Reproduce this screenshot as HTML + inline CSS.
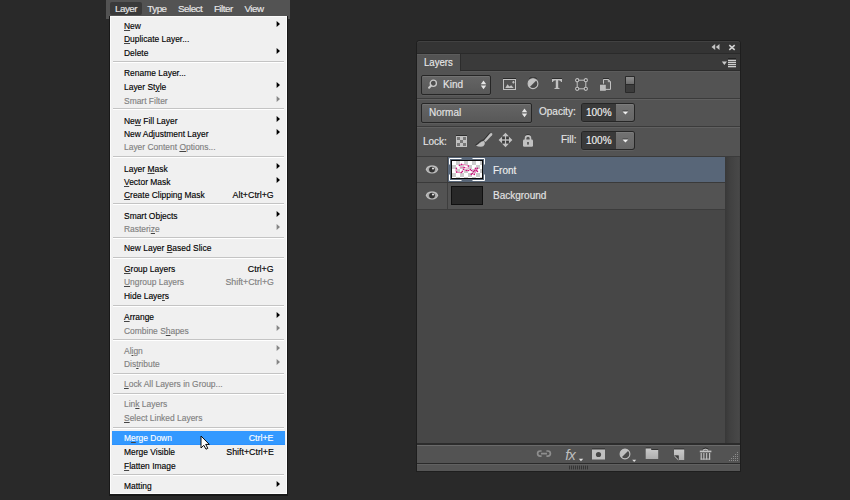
<!DOCTYPE html>
<html><head><meta charset="utf-8"><style>
html,body{margin:0;padding:0;width:850px;height:500px;overflow:hidden;background:#292929;}
body{position:relative;font-family:"Liberation Sans",sans-serif;}
.t{position:absolute;white-space:nowrap;line-height:1;}
.m{-webkit-text-stroke:0.15px currentColor;}
u{text-decoration-color:#444;text-decoration-thickness:1px;text-underline-offset:1px;}
.sep{position:absolute;left:113px;width:171px;height:1px;background:#c4c4c4;border-bottom:1px solid #ffffff;}
.hl{position:absolute;left:112px;width:173px;background:#3399ff;box-shadow:inset 0 -1px 0 #2b91ff;}
.arr{position:absolute;left:276.5px;width:0;height:0;border-top:2.6px solid transparent;border-bottom:2.6px solid transparent;border-left:3.6px solid #000;}
</style></head><body>
<div style="position:absolute;left:106px;top:0;width:184px;height:19px;background:#535353"></div>
<div style="position:absolute;left:110px;top:2px;width:32px;height:13px;background:#3a3a3a;border-radius:2px"></div>
<div class="t m" style="left:115.0px;top:3.70px;font-size:9.8px;color:#e8e8e8;letter-spacing:-0.5px;">Layer</div>
<div class="t m" style="left:147.3px;top:3.70px;font-size:9.8px;color:#e8e8e8;letter-spacing:-0.5px;">Type</div>
<div class="t m" style="left:178.0px;top:3.70px;font-size:9.8px;color:#e8e8e8;letter-spacing:-0.5px;">Select</div>
<div class="t m" style="left:213.9px;top:3.70px;font-size:9.8px;color:#e8e8e8;letter-spacing:-0.5px;">Filter</div>
<div class="t m" style="left:244.5px;top:3.70px;font-size:9.8px;color:#e8e8e8;letter-spacing:-0.5px;">View</div>
<div style="position:absolute;left:109px;top:16px;width:179px;height:480px;background:#181818"></div>
<div style="position:absolute;left:110px;top:16px;width:177px;height:478px;background:#f0f0f0;box-shadow:inset 1px 1px 0 #fbfbfb, inset -1px -1px 0 #fbfbfb"></div>
<div class="t m" style="left:123.6px;top:21.30px;font-size:9.8px;color:#000000;letter-spacing:0px;transform:scaleX(0.862);transform-origin:0 0;"><u>N</u>ew</div>
<svg style="position:absolute;left:275px;top:20.2px" width="6" height="8" viewBox="0 0 6 8"><path d="M1.6 1 L5 4 L1.6 7 Z" fill="#000"/></svg>
<div class="t m" style="left:123.6px;top:34.30px;font-size:9.8px;color:#000000;letter-spacing:0px;transform:scaleX(0.862);transform-origin:0 0;"><u>D</u>uplicate Layer...</div>
<div class="t m" style="left:123.6px;top:48.00px;font-size:9.8px;color:#000000;letter-spacing:0px;transform:scaleX(0.862);transform-origin:0 0;">Delete</div>
<svg style="position:absolute;left:275px;top:46.9px" width="6" height="8" viewBox="0 0 6 8"><path d="M1.6 1 L5 4 L1.6 7 Z" fill="#000"/></svg>
<div class="sep" style="top:61px"></div>
<div class="t m" style="left:123.6px;top:68.00px;font-size:9.8px;color:#000000;letter-spacing:0px;transform:scaleX(0.862);transform-origin:0 0;">Rename Layer...</div>
<div class="t m" style="left:123.6px;top:81.80px;font-size:9.8px;color:#000000;letter-spacing:0px;transform:scaleX(0.862);transform-origin:0 0;">Layer St<u>y</u>le</div>
<svg style="position:absolute;left:275px;top:80.7px" width="6" height="8" viewBox="0 0 6 8"><path d="M1.6 1 L5 4 L1.6 7 Z" fill="#000"/></svg>
<div class="t m" style="left:123.6px;top:95.60px;font-size:9.8px;color:#808080;letter-spacing:0px;transform:scaleX(0.862);transform-origin:0 0;">Smart Filter</div>
<svg style="position:absolute;left:275px;top:94.5px" width="6" height="8" viewBox="0 0 6 8"><path d="M1.6 1 L5 4 L1.6 7 Z" fill="#858585"/></svg>
<div class="sep" style="top:108px"></div>
<div class="t m" style="left:123.6px;top:115.60px;font-size:9.8px;color:#000000;letter-spacing:0px;transform:scaleX(0.862);transform-origin:0 0;">Ne<u>w</u> Fill Layer</div>
<svg style="position:absolute;left:275px;top:114.5px" width="6" height="8" viewBox="0 0 6 8"><path d="M1.6 1 L5 4 L1.6 7 Z" fill="#000"/></svg>
<div class="t m" style="left:123.6px;top:128.90px;font-size:9.8px;color:#000000;letter-spacing:0px;transform:scaleX(0.862);transform-origin:0 0;">New Adjustment Layer</div>
<svg style="position:absolute;left:275px;top:127.8px" width="6" height="8" viewBox="0 0 6 8"><path d="M1.6 1 L5 4 L1.6 7 Z" fill="#000"/></svg>
<div class="t m" style="left:123.6px;top:142.10px;font-size:9.8px;color:#808080;letter-spacing:0px;transform:scaleX(0.862);transform-origin:0 0;">Layer Content <u>O</u>ptions...</div>
<div class="sep" style="top:156px"></div>
<div class="t m" style="left:123.6px;top:163.50px;font-size:9.8px;color:#000000;letter-spacing:0px;transform:scaleX(0.862);transform-origin:0 0;">Layer <u>M</u>ask</div>
<svg style="position:absolute;left:275px;top:162.4px" width="6" height="8" viewBox="0 0 6 8"><path d="M1.6 1 L5 4 L1.6 7 Z" fill="#000"/></svg>
<div class="t m" style="left:123.6px;top:177.10px;font-size:9.8px;color:#000000;letter-spacing:0px;transform:scaleX(0.862);transform-origin:0 0;"><u>V</u>ector Mask</div>
<svg style="position:absolute;left:275px;top:176.0px" width="6" height="8" viewBox="0 0 6 8"><path d="M1.6 1 L5 4 L1.6 7 Z" fill="#000"/></svg>
<div class="t m" style="left:123.6px;top:190.30px;font-size:9.8px;color:#000000;letter-spacing:0px;transform:scaleX(0.862);transform-origin:0 0;"><u>C</u>reate Clipping Mask</div>
<div class="t m" style="right:576.5px;top:190.30px;font-size:9.8px;color:#000000;letter-spacing:0px;transform:scaleX(0.9);transform-origin:100% 0;">Alt+Ctrl+G</div>
<div class="sep" style="top:203px"></div>
<div class="t m" style="left:123.6px;top:210.80px;font-size:9.8px;color:#000000;letter-spacing:0px;transform:scaleX(0.862);transform-origin:0 0;">Smart Objects</div>
<svg style="position:absolute;left:275px;top:209.7px" width="6" height="8" viewBox="0 0 6 8"><path d="M1.6 1 L5 4 L1.6 7 Z" fill="#000"/></svg>
<div class="t m" style="left:123.6px;top:224.30px;font-size:9.8px;color:#808080;letter-spacing:0px;transform:scaleX(0.862);transform-origin:0 0;">Rasteri<u>z</u>e</div>
<svg style="position:absolute;left:275px;top:223.2px" width="6" height="8" viewBox="0 0 6 8"><path d="M1.6 1 L5 4 L1.6 7 Z" fill="#858585"/></svg>
<div class="sep" style="top:237px"></div>
<div class="t m" style="left:123.6px;top:243.30px;font-size:9.8px;color:#000000;letter-spacing:0px;transform:scaleX(0.862);transform-origin:0 0;">New Layer <u>B</u>ased Slice</div>
<div class="sep" style="top:257px"></div>
<div class="t m" style="left:123.6px;top:263.70px;font-size:9.8px;color:#000000;letter-spacing:0px;transform:scaleX(0.862);transform-origin:0 0;"><u>G</u>roup Layers</div>
<div class="t m" style="right:576.5px;top:263.70px;font-size:9.8px;color:#000000;letter-spacing:0px;transform:scaleX(0.9);transform-origin:100% 0;">Ctrl+G</div>
<div class="t m" style="left:123.6px;top:277.30px;font-size:9.8px;color:#808080;letter-spacing:0px;transform:scaleX(0.862);transform-origin:0 0;"><u>U</u>ngroup Layers</div>
<div class="t m" style="right:576.5px;top:277.30px;font-size:9.8px;color:#808080;letter-spacing:0px;transform:scaleX(0.9);transform-origin:100% 0;">Shift+Ctrl+G</div>
<div class="t m" style="left:123.6px;top:291.00px;font-size:9.8px;color:#000000;letter-spacing:0px;transform:scaleX(0.862);transform-origin:0 0;">Hide Laye<u>r</u>s</div>
<div class="sep" style="top:305px"></div>
<div class="t m" style="left:123.6px;top:311.90px;font-size:9.8px;color:#000000;letter-spacing:0px;transform:scaleX(0.862);transform-origin:0 0;"><u>A</u>rrange</div>
<svg style="position:absolute;left:275px;top:310.8px" width="6" height="8" viewBox="0 0 6 8"><path d="M1.6 1 L5 4 L1.6 7 Z" fill="#000"/></svg>
<div class="t m" style="left:123.6px;top:325.50px;font-size:9.8px;color:#808080;letter-spacing:0px;transform:scaleX(0.862);transform-origin:0 0;">Combine S<u>h</u>apes</div>
<svg style="position:absolute;left:275px;top:324.4px" width="6" height="8" viewBox="0 0 6 8"><path d="M1.6 1 L5 4 L1.6 7 Z" fill="#858585"/></svg>
<div class="sep" style="top:339px"></div>
<div class="t m" style="left:123.6px;top:345.50px;font-size:9.8px;color:#808080;letter-spacing:0px;transform:scaleX(0.862);transform-origin:0 0;">Al<u>i</u>gn</div>
<svg style="position:absolute;left:275px;top:344.4px" width="6" height="8" viewBox="0 0 6 8"><path d="M1.6 1 L5 4 L1.6 7 Z" fill="#858585"/></svg>
<div class="t m" style="left:123.6px;top:359.30px;font-size:9.8px;color:#808080;letter-spacing:0px;transform:scaleX(0.862);transform-origin:0 0;">Dis<u>t</u>ribute</div>
<svg style="position:absolute;left:275px;top:358.2px" width="6" height="8" viewBox="0 0 6 8"><path d="M1.6 1 L5 4 L1.6 7 Z" fill="#858585"/></svg>
<div class="sep" style="top:373px"></div>
<div class="t m" style="left:123.6px;top:379.10px;font-size:9.8px;color:#808080;letter-spacing:0px;transform:scaleX(0.862);transform-origin:0 0;"><u>L</u>ock All Layers in Group...</div>
<div class="sep" style="top:393px"></div>
<div class="t m" style="left:123.6px;top:399.30px;font-size:9.8px;color:#808080;letter-spacing:0px;transform:scaleX(0.862);transform-origin:0 0;">Lin<u>k</u> Layers</div>
<div class="t m" style="left:123.6px;top:412.90px;font-size:9.8px;color:#808080;letter-spacing:0px;transform:scaleX(0.862);transform-origin:0 0;"><u>S</u>elect Linked Layers</div>
<div class="sep" style="top:427px"></div>
<div class="hl" style="top:431px;height:14px"></div>
<div class="t m" style="left:123.6px;top:433.10px;font-size:9.8px;color:#ffffff;letter-spacing:0px;transform:scaleX(0.862);transform-origin:0 0;">M<u>e</u>rge Down</div>
<div class="t m" style="right:576.5px;top:433.10px;font-size:9.8px;color:#ffffff;letter-spacing:0px;transform:scaleX(0.9);transform-origin:100% 0;">Ctrl+E</div>
<div class="t m" style="left:123.6px;top:446.90px;font-size:9.8px;color:#000000;letter-spacing:0px;transform:scaleX(0.862);transform-origin:0 0;">Merge Visible</div>
<div class="t m" style="right:576.5px;top:446.90px;font-size:9.8px;color:#000000;letter-spacing:0px;transform:scaleX(0.9);transform-origin:100% 0;">Shift+Ctrl+E</div>
<div class="t m" style="left:123.6px;top:460.80px;font-size:9.8px;color:#000000;letter-spacing:0px;transform:scaleX(0.862);transform-origin:0 0;"><u>F</u>latten Image</div>
<div class="sep" style="top:474px"></div>
<div class="t m" style="left:123.6px;top:480.90px;font-size:9.8px;color:#000000;letter-spacing:0px;transform:scaleX(0.862);transform-origin:0 0;">Matting</div>
<svg style="position:absolute;left:275px;top:479.8px" width="6" height="8" viewBox="0 0 6 8"><path d="M1.6 1 L5 4 L1.6 7 Z" fill="#000"/></svg>
<svg style="position:absolute;left:199.5px;top:434.5px" width="11" height="15" viewBox="0 0 11 15"><path d="M1 1 V13 L3.8 10.3 L6 14.2 L7.8 13.3 L5.7 9.4 H9.3 Z" fill="#ffffff" stroke="#0a0a0a" stroke-width="1" stroke-linejoin="miter"/></svg>
<div style="position:absolute;left:416px;top:40px;width:325px;height:432px;background:#1e1e1e;border-radius:4px 4px 0 0"></div>
<div style="position:absolute;left:417px;top:41px;width:323px;height:12px;background:#343434;border-radius:3px 3px 0 0;box-shadow:inset 0 1px 0 #414141"></div>
<div style="position:absolute;left:417px;top:53px;width:323px;height:1px;background:#2a2a2a;"></div>
<div style="position:absolute;left:417px;top:54px;width:323px;height:17px;background:#3a3a3a;"></div>
<div style="position:absolute;left:460px;top:54px;width:1px;height:17px;background:#2c2c2c;"></div>
<div style="position:absolute;left:461px;top:70px;width:279px;height:1px;background:#2c2c2c;"></div>
<div style="position:absolute;left:417px;top:54px;width:43px;height:17px;background:#535353;box-shadow:inset 0 1px 0 #5c5c5c"></div>
<div style="position:absolute;left:417px;top:71px;width:323px;height:372px;background:#535353;"></div>
<div style="position:absolute;left:461px;top:71px;width:279px;height:1px;background:#5b5b5b;"></div>
<div class="t m" style="left:424px;top:57.53px;font-size:10px;color:#e8e8e8;letter-spacing:0px;transform:scaleX(0.96);transform-origin:0 0;">Layers</div>
<div style="position:absolute;left:417px;top:98px;width:323px;height:1px;background:#3b3b3b;"></div>
<div style="position:absolute;left:417px;top:99px;width:323px;height:1px;background:#606060;"></div>
<div style="position:absolute;left:417px;top:126px;width:323px;height:1px;background:#3b3b3b;"></div>
<div style="position:absolute;left:417px;top:127px;width:323px;height:1px;background:#606060;"></div>
<div style="position:absolute;left:417px;top:156px;width:323px;height:1px;background:#3b3b3b;"></div>
<svg style="position:absolute;left:711px;top:44px" width="9" height="7" viewBox="0 0 9 7"><path d="M0.5 3 L4.2 0 V6 Z M4.8 3 L8.5 0 V6 Z" fill="#c4c4c4"/></svg>
<svg style="position:absolute;left:728px;top:44px" width="8" height="7" viewBox="0 0 8 7"><path d="M1.3 1.2 L6.7 5.8 M6.7 1.2 L1.3 5.8" stroke="#d2d2d2" stroke-width="1.6"/></svg>
<svg style="position:absolute;left:721px;top:58px" width="16" height="10" viewBox="0 0 16 10"><path d="M0.8 3.5 H6 L3.4 7 Z" fill="#c8c8c8"/><rect x="7" y="0" width="8" height="1" fill="#222"/><rect x="7" y="1.8" width="8" height="1.3" fill="#cfcfcf"/><rect x="7" y="3.8" width="8" height="1.3" fill="#cfcfcf"/><rect x="7" y="5.9" width="8" height="1.3" fill="#cfcfcf"/><rect x="7" y="8" width="8" height="1.3" fill="#cfcfcf"/></svg>
<div style="position:absolute;left:421px;top:75px;width:70px;height:20px;background:linear-gradient(#656565,#585858);box-sizing:border-box;border:1px solid #262626;border-radius:2px;box-shadow:inset 0 1px 0 #727272, 0 1px 0 #5c5c5c"></div>
<svg style="position:absolute;left:427px;top:79px" width="11" height="11" viewBox="0 0 11 11"><circle cx="6.3" cy="4.3" r="3.1" fill="#4e4e4e" stroke="#c8c8c8" stroke-width="1.3"/><path d="M4 6.6 L2.1 8.7" stroke="#c8c8c8" stroke-width="2.1" stroke-linecap="round"/></svg>
<div class="t m" style="left:443px;top:79.83px;font-size:10px;color:#e4e4e4;letter-spacing:0px;">Kind</div>
<svg style="position:absolute;left:480.0px;top:80px" width="7" height="10" viewBox="0 0 7 10"><path d="M0.8 4.2 L3.5 0.6 L6.2 4.2 Z M0.8 5.6 L3.5 9.2 L6.2 5.6 Z" fill="#e6e6e6"/></svg>
<svg style="position:absolute;left:502px;top:77px" width="16" height="14" viewBox="0 0 16 14"><rect x="1" y="1" width="13" height="1" fill="#2a2a2a"/><rect x="1.5" y="2.5" width="12" height="10" fill="none" stroke="#c2c2c2" stroke-width="1"/><path d="M3.3 11 L5.5 7.2 L7.4 9.6 L9.2 8.2 L11.7 11 Z" fill="#c2c2c2"/><path d="M10.2 5.2 H12.6 M11.4 4 V6.4" stroke="#c2c2c2" stroke-width="1.1"/></svg>
<svg style="position:absolute;left:526px;top:77px" width="14" height="14" viewBox="0 0 14 14"><circle cx="7" cy="6.7" r="4.9" fill="#c2c2c2"/><path d="M10.5 3.2 A4.9 4.9 0 0 1 3.5 10.2 Z" fill="#4a4a4a"/><circle cx="7" cy="6.7" r="4.9" fill="none" stroke="#c2c2c2" stroke-width="1.1"/><path d="M3 1.8 A5.4 5.4 0 0 1 11 1.8" stroke="#2e2e2e" fill="none" stroke-width="0.8"/></svg>
<svg style="position:absolute;left:551px;top:77px" width="12" height="13" viewBox="0 0 12 13"><rect x="1" y="1" width="10" height="1" fill="#2e2e2e"/><path d="M1 2 H11 V5 H10.2 Q9.8 3.3 7.2 3.3 V10.6 Q7.3 11.2 8.6 11.3 V12 H3.4 V11.3 Q4.7 11.2 4.8 10.6 V3.3 Q2.2 3.3 1.8 5 H1 Z" fill="#c2c2c2"/></svg>
<svg style="position:absolute;left:575px;top:78px" width="13" height="13" viewBox="0 0 13 13"><path d="M2 2.2 H11 M2 10.8 H11 M2.2 2 V11 M10.8 2 V11" stroke="#c2c2c2" stroke-width="1"/><circle cx="2.2" cy="2.2" r="1.6" fill="#3c3c3c" stroke="#c2c2c2" stroke-width="1.1"/><circle cx="2.2" cy="10.8" r="1.6" fill="#3c3c3c" stroke="#c2c2c2" stroke-width="1.1"/><circle cx="10.8" cy="2.2" r="1.6" fill="#3c3c3c" stroke="#c2c2c2" stroke-width="1.1"/><circle cx="10.8" cy="10.8" r="1.6" fill="#3c3c3c" stroke="#c2c2c2" stroke-width="1.1"/></svg>
<svg style="position:absolute;left:599px;top:77px" width="14" height="15" viewBox="0 0 14 15"><rect x="4" y="1" width="6" height="1" fill="#2e2e2e"/><path d="M4.5 2.5 H9.3 L11.5 4.7 V12.4 H4.5 Z" fill="#5a5a5a" stroke="#c2c2c2" stroke-width="1"/><path d="M9.3 2.5 V4.7 H11.5" fill="none" stroke="#c2c2c2" stroke-width="1"/><rect x="1" y="6.8" width="5.8" height="1" fill="#2e2e2e"/><rect x="1" y="7.6" width="5.8" height="6.2" fill="#bcbcbc"/></svg>
<div style="position:absolute;left:625px;top:76px;width:10px;height:17px;background:#2a2a2a;border-radius:1px"></div>
<div style="position:absolute;left:626px;top:77px;width:8px;height:7px;background:linear-gradient(#8e8e8e,#6c6c6c);"></div>
<div style="position:absolute;left:626px;top:85px;width:8px;height:7px;background:#3c3c3c;"></div>
<div style="position:absolute;left:421px;top:103px;width:111px;height:20px;background:linear-gradient(#656565,#585858);box-sizing:border-box;border:1px solid #262626;border-radius:2px;box-shadow:inset 0 1px 0 #727272, 0 1px 0 #5c5c5c"></div>
<div class="t m" style="left:429px;top:107.53px;font-size:10px;color:#e4e4e4;letter-spacing:0px;">Normal</div>
<svg style="position:absolute;left:521.0px;top:108px" width="7" height="10" viewBox="0 0 7 10"><path d="M0.8 4.2 L3.5 0.6 L6.2 4.2 Z M0.8 5.6 L3.5 9.2 L6.2 5.6 Z" fill="#e6e6e6"/></svg>
<div class="t m" style="left:539px;top:106.83px;font-size:10px;color:#e4e4e4;letter-spacing:0px;">Opacity:</div>
<div style="position:absolute;left:581px;top:103px;width:54px;height:19px;background:#262626;border-radius:3px;box-shadow:0 1px 0 #5e5e5e"></div>
<div style="position:absolute;left:582px;top:104px;width:34px;height:17px;background:#3a3a3a;border-radius:1px 0 0 1px"></div>
<div style="position:absolute;left:616px;top:104px;width:18px;height:17px;background:linear-gradient(#727272,#666666);border-radius:0 2px 2px 0;box-shadow:inset 0 1px 0 #7c7c7c"></div>
<svg style="position:absolute;left:622px;top:110px" width="7" height="6" viewBox="0 0 7 6"><rect x="0.6" y="0.6" width="5.4" height="0.9" fill="#333"/><path d="M0.5 1.5 H6.3 L3.4 4.6 Z" fill="#f0f0f0"/></svg>
<div class="t m" style="left:586px;top:107.53px;font-size:10px;color:#f0f0f0;letter-spacing:0px;">100%</div>
<div class="t m" style="left:423px;top:136.53px;font-size:10px;color:#e4e4e4;letter-spacing:0px;">Lock:</div>
<svg style="position:absolute;left:455px;top:134px" width="13" height="13" viewBox="0 0 13 13"><rect x="1" y="1" width="11" height="1" fill="#2e2e2e"/><rect x="1" y="2" width="11" height="11" fill="#c2c2c2"/><rect x="2" y="3" width="3" height="3" fill="#777"/><rect x="2" y="9" width="3" height="3" fill="#777"/><rect x="5" y="6" width="3" height="3" fill="#777"/><rect x="8" y="3" width="3" height="3" fill="#777"/><rect x="8" y="9" width="3" height="3" fill="#777"/></svg>
<svg style="position:absolute;left:475px;top:132px" width="19" height="16" viewBox="0 0 19 16"><path d="M1 13.6 Q3.5 12.2 5 10.4 Q6.8 8.6 9 8.6 L15.4 1.2" stroke="#2e2e2e" stroke-width="1" fill="none" transform="translate(-0.5,-0.6)"/><path d="M17.2 1.4 Q17.7 2.3 17 3.2 L10.6 9.9 L8.9 8.7 L15.1 1.5 Q16.2 0.6 17.2 1.4 Z" fill="#c2c2c2"/><path d="M9 9 Q10.4 10.5 9.6 12.6 Q8.8 14.8 6 14.8 Q3 14.8 1 13.8 Q3.5 12.5 5 10.8 Q6.8 9 9 9 Z" fill="#c2c2c2"/></svg>
<svg style="position:absolute;left:498px;top:132px" width="16" height="16" viewBox="0 0 16 16"><path d="M7.5 0.8 L10.8 4.2 H4.2 Z M7.5 15.2 L10.8 11.8 H4.2 Z M0.6 8 L4 4.7 V11.3 Z M14.4 8 L11 4.7 V11.3 Z" fill="#c2c2c2"/><rect x="6.9" y="2" width="1.2" height="12" fill="#c2c2c2"/><rect x="2" y="7.4" width="11" height="1.2" fill="#c2c2c2"/><rect x="4.4" y="5.6" width="2.3" height="1.1" fill="#2a2a2a"/><rect x="8.3" y="5.6" width="2.3" height="1.1" fill="#2a2a2a"/><rect x="4.4" y="9.3" width="2.3" height="1.1" fill="#2a2a2a"/><rect x="8.3" y="9.3" width="2.3" height="1.1" fill="#2a2a2a"/></svg>
<svg style="position:absolute;left:522px;top:133px" width="12" height="15" viewBox="0 0 12 15"><path d="M3.4 2.3 Q6 0.9 8.6 2.3" stroke="#2e2e2e" fill="none" stroke-width="0.9"/><path d="M3.5 7 V5.4 Q3.5 2.9 6 2.9 Q8.5 2.9 8.5 5.4 V7" fill="none" stroke="#c2c2c2" stroke-width="1.6"/><rect x="1" y="6.6" width="10" height="7.2" rx="1.2" fill="#c2c2c2"/><rect x="5.3" y="9" width="1.4" height="2.6" fill="#3a3a3a"/></svg>
<div class="t m" style="left:561px;top:134.73px;font-size:10px;color:#e4e4e4;letter-spacing:0px;">Fill:</div>
<div style="position:absolute;left:581px;top:131px;width:54px;height:19px;background:#262626;border-radius:3px;box-shadow:0 1px 0 #5e5e5e"></div>
<div style="position:absolute;left:582px;top:132px;width:34px;height:17px;background:#3a3a3a;border-radius:1px 0 0 1px"></div>
<div style="position:absolute;left:616px;top:132px;width:18px;height:17px;background:linear-gradient(#727272,#666666);border-radius:0 2px 2px 0;box-shadow:inset 0 1px 0 #7c7c7c"></div>
<svg style="position:absolute;left:622px;top:138px" width="7" height="6" viewBox="0 0 7 6"><rect x="0.6" y="0.6" width="5.4" height="0.9" fill="#333"/><path d="M0.5 1.5 H6.3 L3.4 4.6 Z" fill="#f0f0f0"/></svg>
<div class="t m" style="left:586px;top:135.73px;font-size:10px;color:#f0f0f0;letter-spacing:0px;">100%</div>
<div style="position:absolute;left:417px;top:157px;width:308px;height:286px;background:#474747;"></div>
<div style="position:absolute;left:725px;top:157px;width:15px;height:286px;background:linear-gradient(to right,#383838,#404040 30%,#464646 75%,#484848 92%,#424242);"></div>
<div style="position:absolute;left:417px;top:157px;width:308px;height:25px;background:#535353;"></div>
<div style="position:absolute;left:448px;top:157px;width:277px;height:25px;background:#586678;"></div>
<div style="position:absolute;left:447px;top:157px;width:1px;height:25px;background:#3e3e3e;"></div>
<div style="position:absolute;left:417px;top:182px;width:308px;height:1px;background:#3a3a3a;"></div>
<div style="position:absolute;left:417px;top:183px;width:308px;height:26px;background:#535353;"></div>
<div style="position:absolute;left:447px;top:183px;width:1px;height:26px;background:#3e3e3e;"></div>
<div style="position:absolute;left:417px;top:209px;width:308px;height:1px;background:#3c3c3c;"></div>
<svg style="position:absolute;left:425px;top:162.5px" width="14" height="12" viewBox="0 0 14 12"><path d="M1.2 5.2 Q7 -0.4 12.8 5.2" stroke="#2e2e2e" stroke-width="0.9" fill="none"/><ellipse cx="7" cy="6.3" rx="6.1" ry="4.1" fill="#c2c2c2"/><ellipse cx="7" cy="6.4" rx="4.7" ry="2.7" fill="#a6a6a6"/><circle cx="7" cy="6.6" r="2.9" fill="#323232"/><circle cx="8" cy="5.5" r="1.1" fill="#dedede"/></svg>
<svg style="position:absolute;left:425px;top:188.6px" width="14" height="12" viewBox="0 0 14 12"><path d="M1.2 5.2 Q7 -0.4 12.8 5.2" stroke="#2e2e2e" stroke-width="0.9" fill="none"/><ellipse cx="7" cy="6.3" rx="6.1" ry="4.1" fill="#c2c2c2"/><ellipse cx="7" cy="6.4" rx="4.7" ry="2.7" fill="#a6a6a6"/><circle cx="7" cy="6.6" r="2.9" fill="#323232"/><circle cx="8" cy="5.5" r="1.1" fill="#dedede"/></svg>
<svg style="position:absolute;left:449px;top:158px" width="36" height="23" viewBox="0 0 36 23"><path d="M0.5 6.5 V0.5 H12.5 M23.5 0.5 H35.5 V6.5 M35.5 16.5 V22.5 H23.5 M12.5 22.5 H0.5 V16.5" fill="none" stroke="#ffffff" stroke-width="1"/><rect x="2" y="2" width="32" height="19" fill="#0a0a0a"/><svg x="3" y="3" width="30" height="17"><rect width="30" height="17" fill="#ffffff"/><rect x="0" y="4" width="4" height="4" fill="#cccccc"/><rect x="0" y="12" width="4" height="4" fill="#cccccc"/><rect x="0" y="20" width="4" height="4" fill="#cccccc"/><rect x="4" y="0" width="4" height="4" fill="#cccccc"/><rect x="4" y="8" width="4" height="4" fill="#cccccc"/><rect x="4" y="16" width="4" height="4" fill="#cccccc"/><rect x="8" y="4" width="4" height="4" fill="#cccccc"/><rect x="8" y="12" width="4" height="4" fill="#cccccc"/><rect x="8" y="20" width="4" height="4" fill="#cccccc"/><rect x="12" y="0" width="4" height="4" fill="#cccccc"/><rect x="12" y="8" width="4" height="4" fill="#cccccc"/><rect x="12" y="16" width="4" height="4" fill="#cccccc"/><rect x="16" y="4" width="4" height="4" fill="#cccccc"/><rect x="16" y="12" width="4" height="4" fill="#cccccc"/><rect x="16" y="20" width="4" height="4" fill="#cccccc"/><rect x="20" y="0" width="4" height="4" fill="#cccccc"/><rect x="20" y="8" width="4" height="4" fill="#cccccc"/><rect x="20" y="16" width="4" height="4" fill="#cccccc"/><rect x="24" y="4" width="4" height="4" fill="#cccccc"/><rect x="24" y="12" width="4" height="4" fill="#cccccc"/><rect x="24" y="20" width="4" height="4" fill="#cccccc"/><rect x="28" y="0" width="4" height="4" fill="#cccccc"/><rect x="28" y="8" width="4" height="4" fill="#cccccc"/><rect x="28" y="16" width="4" height="4" fill="#cccccc"/><rect x="32" y="4" width="4" height="4" fill="#cccccc"/><rect x="32" y="12" width="4" height="4" fill="#cccccc"/><rect x="32" y="20" width="4" height="4" fill="#cccccc"/></svg><svg x="3" y="3" width="30" height="17"><path d="M7.4 4.4 Q9 3 12 3.6 Q14.5 4 16.4 5.1 M4.4 7.4 Q2.8 9.5 4.6 11.1 Q7 12 9.4 11.5 L10.4 10.4 M12.2 6.5 L11.5 8.5 M8 6.8 Q10 6.2 12.2 6.5 Q14 7 16.4 7.2 M14.3 9.5 L16.4 9.5 L18.4 8.5 L19.4 9.5 L21.6 10.6 L22.6 9.5 L23.5 7.4 M24.4 9.4 L25.4 10.4 M25.4 7.4 L24.4 9.4 L22.3 13.4 L20.3 12.5 M19.3 13.4 L20.3 12.5" fill="none" stroke="#f07ab8" stroke-width="0.9" stroke-linecap="round"/><g fill="#c8147c"><circle cx="7.4" cy="4.4" r="0.8"/><circle cx="9.5" cy="3.4" r="0.8"/><circle cx="16.4" cy="5.1" r="0.8"/><circle cx="12.2" cy="6.5" r="0.8"/><circle cx="11.5" cy="8.5" r="0.8"/><circle cx="4.4" cy="7.4" r="0.8"/><circle cx="10.4" cy="10.4" r="0.8"/><circle cx="9.4" cy="11.5" r="0.8"/><circle cx="4.6" cy="11.1" r="0.8"/><circle cx="14.3" cy="9.5" r="0.8"/><circle cx="16.4" cy="9.5" r="0.8"/><circle cx="18.4" cy="8.5" r="0.8"/><circle cx="19.4" cy="9.5" r="0.8"/><circle cx="22.6" cy="9.5" r="0.8"/><circle cx="23.5" cy="7.4" r="0.8"/><circle cx="25.4" cy="7.4" r="0.8"/><circle cx="25.4" cy="10.4" r="0.8"/><circle cx="24.4" cy="9.4" r="0.8"/><circle cx="20.3" cy="12.5" r="0.8"/><circle cx="22.3" cy="13.4" r="0.8"/><circle cx="19.3" cy="13.4" r="0.8"/><circle cx="21.6" cy="10.6" r="0.8"/></g></svg></svg>
<div class="t m" style="left:493px;top:165.53px;font-size:10px;color:#eeeeee;letter-spacing:0px;">Front</div>
<div style="position:absolute;left:451px;top:186px;width:32px;height:19px;background:#101010;"></div>
<div style="position:absolute;left:452px;top:187px;width:30px;height:17px;background:#282828;"></div>
<div class="t m" style="left:493px;top:191.03px;font-size:10px;color:#e4e4e4;letter-spacing:0px;">Background</div>
<div style="position:absolute;left:417px;top:443px;width:323px;height:2px;background:#2c2c2c;"></div>
<div style="position:absolute;left:417px;top:445px;width:323px;height:1px;background:#6a6a6a;"></div>
<div style="position:absolute;left:417px;top:446px;width:323px;height:17px;background:#535353;"></div>
<div style="position:absolute;left:417px;top:463px;width:323px;height:1px;background:#2a2a2a;"></div>
<div style="position:absolute;left:417px;top:464px;width:323px;height:1px;background:#616161;"></div>
<div style="position:absolute;left:417px;top:465px;width:323px;height:6px;background:#555555;"></div>
<svg style="position:absolute;left:568px;top:465px" width="21" height="5" viewBox="0 0 21 5"><rect x="1" y="0.6" width="1" height="3.8" fill="#353535"/><rect x="3" y="0.6" width="1" height="3.8" fill="#353535"/><rect x="5" y="0.6" width="1" height="3.8" fill="#353535"/><rect x="7" y="0.6" width="1" height="3.8" fill="#353535"/><rect x="9" y="0.6" width="1" height="3.8" fill="#353535"/><rect x="11" y="0.6" width="1" height="3.8" fill="#353535"/><rect x="13" y="0.6" width="1" height="3.8" fill="#353535"/><rect x="15" y="0.6" width="1" height="3.8" fill="#353535"/><rect x="17" y="0.6" width="1" height="3.8" fill="#353535"/><rect x="19" y="0.6" width="1" height="3.8" fill="#353535"/></svg>
<svg style="position:absolute;left:536px;top:449px" width="16" height="10" viewBox="0 0 16 10"><path d="M5.6 2 H4.2 Q1.6 2 1.6 4.6 Q1.6 7.2 4.2 7.2 H5.6 M10.4 2 H11.8 Q14.4 2 14.4 4.6 Q14.4 7.2 11.8 7.2 H10.4 M5 4.6 H11" fill="none" stroke="#8e8e8e" stroke-width="1.7"/></svg>
<svg style="position:absolute;left:564px;top:447px" width="20" height="16" viewBox="0 0 20 16"><text x="1.2" y="12.6" font-family="Liberation Sans" font-style="italic" font-size="14.5" letter-spacing="-0.6" fill="#bdbdbd">fx</text><path d="M14.8 11.8 H19.2 L17 14.2 Z" fill="#e0e0e0"/></svg>
<svg style="position:absolute;left:591px;top:448px" width="16" height="13" viewBox="0 0 16 13"><rect x="1" y="0.5" width="13" height="1" fill="#262626"/><rect x="1" y="1.5" width="13" height="10" fill="#c0c0c0"/><circle cx="7.5" cy="6.5" r="2.6" fill="#484848"/></svg>
<svg style="position:absolute;left:618px;top:448px" width="19" height="15" viewBox="0 0 19 15"><circle cx="7" cy="6" r="4.9" fill="#c0c0c0"/><path d="M10.5 2.5 A4.9 4.9 0 0 1 3.5 9.5 Z" fill="#4a4a4a"/><circle cx="7" cy="6" r="4.9" fill="none" stroke="#c0c0c0" stroke-width="1.1"/><path d="M14.2 11.8 H18.2 L16.2 14 Z" fill="#e0e0e0"/></svg>
<svg style="position:absolute;left:645px;top:447px" width="15" height="14" viewBox="0 0 15 14"><defs><linearGradient id="fg" x1="0" y1="0" x2="0" y2="1"><stop offset="0" stop-color="#cacaca"/><stop offset="1" stop-color="#adadad"/></linearGradient></defs><rect x="0.7" y="0.6" width="5.2" height="0.8" fill="#2a2a2a"/><rect x="6" y="2.1" width="7.2" height="0.8" fill="#2a2a2a"/><path d="M0.7 1.4 H5.9 L6.4 2.9 H13.2 V12.1 H0.7 Z" fill="url(#fg)"/></svg>
<svg style="position:absolute;left:672px;top:448px" width="14" height="14" viewBox="0 0 14 14"><defs><linearGradient id="ng" x1="0" y1="0" x2="0" y2="1"><stop offset="0" stop-color="#cacaca"/><stop offset="1" stop-color="#b0b0b0"/></linearGradient></defs><rect x="2" y="0.6" width="10.2" height="0.9" fill="#262626"/><path d="M2 1.5 H12.2 V12 H6.6 V7.6 H2 Z" fill="url(#ng)"/><path d="M2 7.6 H6.6 V12 Z" fill="#3e3e3e"/><path d="M2.3 7.9 L6.3 11.8" stroke="#c8c8c8" stroke-width="1"/></svg>
<svg style="position:absolute;left:699px;top:447px" width="13" height="14" viewBox="0 0 13 14"><path d="M3.6 2 Q6.5 -0.2 9.4 2" stroke="#2a2a2a" stroke-width="0.9" fill="none"/><path d="M4.4 3.8 V2.9 Q6.5 1.5 8.6 2.9 V3.8" fill="none" stroke="#c0c0c0" stroke-width="1.1"/><rect x="0.8" y="3.6" width="11.6" height="1.7" fill="#c0c0c0"/><rect x="1.6" y="6" width="1.2" height="6.6" fill="#c0c0c0"/><rect x="4.3" y="6" width="1.1" height="6.6" fill="#c0c0c0"/><rect x="7.1" y="6" width="1.1" height="6.6" fill="#c0c0c0"/><rect x="10" y="6" width="1.2" height="6.6" fill="#c0c0c0"/><rect x="1.6" y="11.6" width="9.6" height="1" fill="#c0c0c0"/></svg>
<svg style="position:absolute;left:729px;top:452px" width="10" height="10" viewBox="0 0 10 10"><rect x="8" y="0" width="1" height="1" fill="#8c8c8c"/><rect x="6" y="2" width="1" height="1" fill="#8c8c8c"/><rect x="8" y="2" width="1" height="1" fill="#8c8c8c"/><rect x="4" y="4" width="1" height="1" fill="#8c8c8c"/><rect x="6" y="4" width="1" height="1" fill="#8c8c8c"/><rect x="8" y="4" width="1" height="1" fill="#8c8c8c"/><rect x="2" y="6" width="1" height="1" fill="#8c8c8c"/><rect x="4" y="6" width="1" height="1" fill="#8c8c8c"/><rect x="6" y="6" width="1" height="1" fill="#8c8c8c"/><rect x="8" y="6" width="1" height="1" fill="#8c8c8c"/><rect x="0" y="8" width="1" height="1" fill="#8c8c8c"/><rect x="2" y="8" width="1" height="1" fill="#8c8c8c"/><rect x="4" y="8" width="1" height="1" fill="#8c8c8c"/><rect x="6" y="8" width="1" height="1" fill="#8c8c8c"/><rect x="8" y="8" width="1" height="1" fill="#8c8c8c"/></svg>

</body></html>
